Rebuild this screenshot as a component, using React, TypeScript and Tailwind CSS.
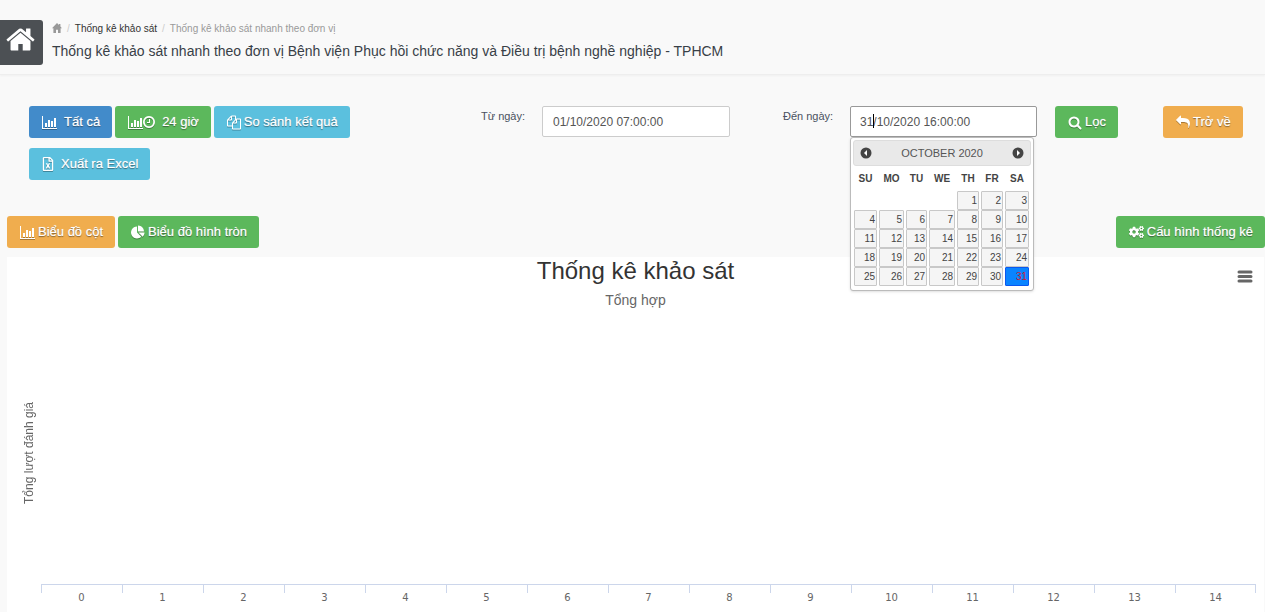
import type { ReactNode } from "react";
import { FaCogs, FaRegFileExcel } from "react-icons/fa";

const WEEKDAYS = ["Su", "Mo", "Tu", "We", "Th", "Fr", "Sa"];

const WEEKS = [
  [0, 0, 0, 0, 1, 2, 3],
  [4, 5, 6, 7, 8, 9, 10],
  [11, 12, 13, 14, 15, 16, 17],
  [18, 19, 20, 21, 22, 23, 24],
  [25, 26, 27, 28, 29, 30, 31],
];

const CATEGORIES = Array.from({ length: 15 }, (_, i) => i);

function Glyph({
  d,
  box = "0 0 1792 1792",
  className = "h-[15px] w-[14px]",
}: {
  d: string;
  box?: string;
  className?: string;
}) {
  return (
    <svg viewBox={box} fill="currentColor" className={className} aria-hidden="true">
      <path d={d} />
    </svg>
  );
}

const HOME =
  "M1472 992v480q0 26-19 45t-45 19h-384v-384h-256v384h-384q-26 0-45-19t-19-45v-480q0-1 .5-3t.5-3l575-474 575 474q1 2 1 6zm223-69l-62 74q-8 9-21 11h-3q-13 0-21-7l-692-577-692 577q-12 8-24 7-13-2-21-11l-62-74q-8-10-7-23.5t11-21.5l719-599q32-26 76-26t76 26l244 204v-195q0-14 9-23t23-9h192q14 0 23 9t9 23v408l219 182q10 8 11 21.5t-7 23.5z";
const HOME_SMALL = "M5 0L0 5.200h1.400V10H4V6.800h2V10h2.600V5.200H10L8.400 3.500V1H7v1.100z";
const CLOCK =
  "M1024 544v448q0 14-9 23t-23 9h-320q-14 0-23-9t-9-23v-64q0-14 9-23t23-9h224v-352q0-14 9-23t23-9h64q14 0 23 9t9 23zm416 352q0-148-73-273t-198-198-273-73-273 73-198 198-73 273 73 273 198 198 273 73 273-73 198-198 73-273zm224 0q0 209-103 385.5t-279.5 279.5-385.5 103-385.5-103-279.5-279.5-103-385.5 103-385.5 279.5-279.5 385.5-103 385.5 103 279.5 279.5 103 385.5z";
const FILES =
  "M1696 384q40 0 68 28t28 68v1216q0 40-28 68t-68 28h-960q-40 0-68-28t-28-68v-288h-544q-40 0-68-28t-28-68v-672q0-40 20-88t48-76l408-408q28-28 76-48t88-20h416q40 0 68 28t28 68v328q68-40 128-40h416zm-544 213l-299 299h299v-299zm-640-384l-299 299h299v-299zm196 647l316-316v-416h-384v416q0 40-28 68t-68 28h-416v640h512v-256q0-40 20-88t48-76zm956 804v-1152h-384v416q0 40-28 68t-68 28h-416v640h896z";
const SEARCH =
  "M1216 832q0-185-131.5-316.5t-316.5-131.5-316.5 131.5-131.5 316.5 131.5 316.5 316.5 131.5 316.5-131.5 131.5-316.5zm512 832q0 52-38 90t-90 38q-54 0-90-38l-343-342q-179 124-399 124-143 0-273.5-55.5t-225-150-150-225-55.5-273.5 55.5-273.5 150-225 225-150 273.5-55.5 273.5 55.5 225 150 150 225 55.5 273.5q0 220-124 399l343 343q37 37 37 90z";
const ARROW =
  "M1792 640q0 26-19 45l-512 512q-19 19-45 19t-45-19-19-45v-256h-224q-98 0-175.5 6t-154 21.5-133 42.5-105.5 69.5-80 101-48.5 138.5-17.5 181q0 55 5 123 0 6 2.5 23.5t2.5 26.5q0 15-8.5 25t-23.5 10q-16 0-28-17-7-9-13-22t-13.5-30-10.5-24q-127-285-127-451 0-199 53-333 162-403 875-403h224v-256q0-26 19-45t45-19 45 19l512 512q19 19 19 45z";
const PIE =
  "M768 890l546 546q-106 108-247.5 168t-298.5 60q-209 0-385.5-103t-279.5-279.5-103-385.5 103-385.5 279.5-279.5 385.5-103v762zm187 6h773q0 157-60 298.5t-168 247.5zm709-128h-768v-768q209 0 385.5 103t279.5 279.5 103 385.5z";

function BarsIcon() {
  return (
    <svg viewBox="0 0 15 13" fill="currentColor" className="h-[13px] w-[15px]" aria-hidden="true">
      <path d="M0 0h1v12h14v1H0zM3 7h2v4H3zM6 4h2v7H6zM9 5h2v6H9zM12 2h2v9h-2z" />
    </svg>
  );
}

const TONES = {
  blue: "bg-[#428bca]",
  green: "bg-[#5cb85c]",
  cyan: "bg-[#5bc0de]",
  orange: "bg-[#f0ad4e]",
};

function Button({
  tone,
  icon,
  wide = false,
  children,
}: {
  tone: keyof typeof TONES;
  icon: ReactNode;
  wide?: boolean;
  children: ReactNode;
}) {
  return (
    <button
      type="button"
      className={`inline-flex h-8 shrink-0 items-center rounded-[3px] pr-3 pl-[13px] text-[13px] leading-5 whitespace-nowrap text-white ${TONES[tone]} ${wide ? "gap-[7px]" : "gap-[3px]"}`}
    >
      <span className="flex shrink-0 items-center drop-shadow-[0_1px_0_rgba(0,0,0,0.3)]">{icon}</span>
      <span className="[text-shadow:0_0_1px_rgba(255,255,255,0.6),0_1px_1px_rgba(0,0,0,0.5)]">{children}</span>
    </button>
  );
}

function MonthArrow({ label, next = false }: { label: string; next?: boolean }) {
  return (
    <button type="button" aria-label={label}>
      <svg viewBox="0 0 12 12" className="h-3 w-3">
        <circle cx="6" cy="6" r="5.5" fill="#444" />
        <path d={next ? "M5 3l3 3-3 3z" : "M7 3L4 6l3 3z"} fill="#fff" />
      </svg>
    </button>
  );
}

function Calendar() {
  return (
    <div className="absolute top-full left-0 z-10 w-[184px] rounded-[3px] border border-[#bbb] bg-white p-[2px] pb-1 text-[#444] shadow-sm">
      <div className="flex h-[26px] items-center justify-between rounded-[3px] border border-[#ddd] bg-[#e9e9e9] px-[6px]">
        <MonthArrow label="Prev" />
        <span className="text-[11px] text-[#555] uppercase">October 2020</span>
        <MonthArrow label="Next" next />
      </div>
      <table className="w-[177px] table-fixed border-collapse">
        <colgroup>
          <col className="w-[25px]" />
          <col className="w-[27px]" />
          <col className="w-[23px]" />
          <col className="w-[28px]" />
          <col className="w-[24px]" />
          <col className="w-[24px]" />
          <col className="w-[26px]" />
        </colgroup>
        <thead>
          <tr className="h-[25px]">
            {WEEKDAYS.map((day) => (
              <th key={day} className="p-0 text-center text-[10px] font-bold uppercase">
                {day}
              </th>
            ))}
          </tr>
        </thead>
        <tbody>
          {WEEKS.map((week) => (
            <tr key={week[6]}>
              {week.map((day, i) => (
                <td key={i} className="p-0 px-px">
                  {day > 0 && (
                    <a
                      href="#"
                      className={`block h-[19px] rounded-[1px] border pr-px text-right text-[10px] leading-[17px] ${
                        day === 31
                          ? "border-[#0a58f0] bg-[#0a84ff] text-[#c8203c]"
                          : "border-[#c8c8c8] bg-[#f5f5f5] text-[#444]"
                      }`}
                    >
                      {day}
                    </a>
                  )}
                </td>
              ))}
            </tr>
          ))}
        </tbody>
      </table>
    </div>
  );
}

function Header() {
  return (
    <header className="flex items-start gap-[9px] border-b border-[#eee] pt-5 pb-[9px] shadow-[0_1px_2px_rgba(0,0,0,0.04)]">
      <a
        href="#"
        aria-label="Trang chủ"
        className="flex h-[45px] w-[43px] shrink-0 justify-center rounded-r-[3px] bg-[#4c5054] pt-1 pr-[2px] text-white"
      >
        <Glyph d={HOME} className="h-[31px] w-[31px]" />
      </a>
      <div>
        <nav className="flex h-4 items-center gap-[5px] text-[10px] text-[#999]">
          <Glyph d={HOME_SMALL} box="0 0 10 10" className="h-[10px] w-[10px]" />
          <span className="text-[#ccc]">/</span>
          <a href="#" className="text-[#333]">
            Thống kê khảo sát
          </a>
          <span className="text-[#ccc]">/</span>
          <span>Thống kê khảo sát nhanh theo đơn vị</span>
        </nav>
        <h1 className="mt-1 text-[14px] leading-[22px] text-[#384047]">
          Thống kê khảo sát nhanh theo đơn vị Bệnh viện Phục hồi chức năng và Điều trị bệnh nghề nghiệp - TPHCM
        </h1>
      </div>
    </header>
  );
}

function Filters() {
  return (
    <form className="mt-[31px] grid grid-cols-[452fr_61fr_241fr_67fr_205fr_108fr_102fr] items-start pl-[29px] text-[12px]">
      <div className="flex flex-wrap gap-x-[3px] gap-y-[10px] pr-12">
        <Button tone="blue" icon={<BarsIcon />} wide>
          Tất cả
        </Button>
        <Button
          tone="green"
          icon={
            <>
              <BarsIcon />
              <Glyph d={CLOCK} box="128 128 1536 1536" className="h-3 w-3" />
            </>
          }
          wide
        >
          24 giờ
        </Button>
        <Button tone="cyan" icon={<Glyph d={FILES} />}>
          So sánh kết quả
        </Button>
        <Button tone="cyan" icon={<FaRegFileExcel className="h-[14px] w-3" />} wide>
          Xuất ra Excel
        </Button>
      </div>
      <label htmlFor="from" className="pt-[2px] text-[11px] leading-4 whitespace-nowrap text-[#4a5160]">
        Từ ngày:
      </label>
      <div className="pr-[53px]">
        <input
          id="from"
          defaultValue="01/10/2020 07:00:00"
          className="h-[31px] w-full rounded-[2px] border border-[#ccc] bg-white px-[10px] text-[12px] text-[#555]"
        />
      </div>
      <label htmlFor="to" className="pt-[2px] text-[11px] leading-4 whitespace-nowrap text-[#4a5160]">
        Đến ngày:
      </label>
      <div className="relative h-[31px] pr-[18px]">
        <input
          id="to"
          defaultValue="31/10/2020 16:00:00"
          className="h-[31px] w-full rounded-[2px] border border-[#999] bg-white px-[9px] text-[12px] text-[#555] outline-none"
        />
        <span className="absolute top-2 left-[23px] h-[14px] w-px bg-black" />
        <Calendar />
      </div>
      <div>
        <Button tone="green" icon={<Glyph d={SEARCH} />}>
          Lọc
        </Button>
      </div>
      <div>
        <Button tone="orange" icon={<Glyph d={ARROW} className="h-[14px] w-[14px] -scale-x-100" />}>
          Trở về
        </Button>
      </div>
    </form>
  );
}

function Chart() {
  return (
    <section className="mt-[9px] mr-px ml-[7px] flex flex-1 flex-col bg-white">
      <div className="relative text-center">
        <h2 className="text-[24px] leading-7 text-[#333]">Thống kê khảo sát</h2>
        <p className="mt-[6px] text-[14px] leading-[18px] text-[#666]">Tổng hợp</p>
        <button type="button" aria-label="Menu" className="absolute top-3 right-[11px]">
          <svg viewBox="0 0 16 15" className="h-[15px] w-4" stroke="#666" strokeWidth="3" strokeLinecap="round">
            <path d="M2 3h12M2 7.500h12M2 12h12" />
          </svg>
        </button>
      </div>
      <div className="flex flex-1 items-center pt-3 pl-[14px]">
        <span className="rotate-180 text-[12px] leading-4 text-[#666] [writing-mode:vertical-rl]">
          Tổng lượt đánh giá
        </span>
      </div>
      <div className="mr-2 ml-[34px] flex h-7 border-t border-[#ccd6eb] font-['DejaVu_Sans',sans-serif]">
        {CATEGORIES.map((n) => (
          <div key={n} className="relative flex-1 pt-[6px] text-center text-[10px] leading-[14px] text-[#666]">
            <span className={`absolute inset-x-0 top-0 h-2 border-l border-[#ccd6eb] ${n === 14 ? "border-r" : ""}`} />
            {n}
          </div>
        ))}
      </div>
    </section>
  );
}

export default function App() {
  return (
    <div className="flex min-h-screen flex-col bg-[#f9f9f9] font-['Liberation_Sans',Arial,sans-serif]">
      <Header />
      <Filters />
      <div className="mt-9 flex justify-between pl-[7px]">
        <div className="flex gap-[3px]">
          <Button tone="orange" icon={<BarsIcon />}>
            Biểu đồ cột
          </Button>
          <Button tone="green" icon={<Glyph d={PIE} />}>
            Biểu đồ hình tròn
          </Button>
        </div>
        <Button tone="green" icon={<FaCogs className="h-[14px] w-[15px]" />}>
          Cấu hình thống kê
        </Button>
      </div>
      <Chart />
    </div>
  );
}
